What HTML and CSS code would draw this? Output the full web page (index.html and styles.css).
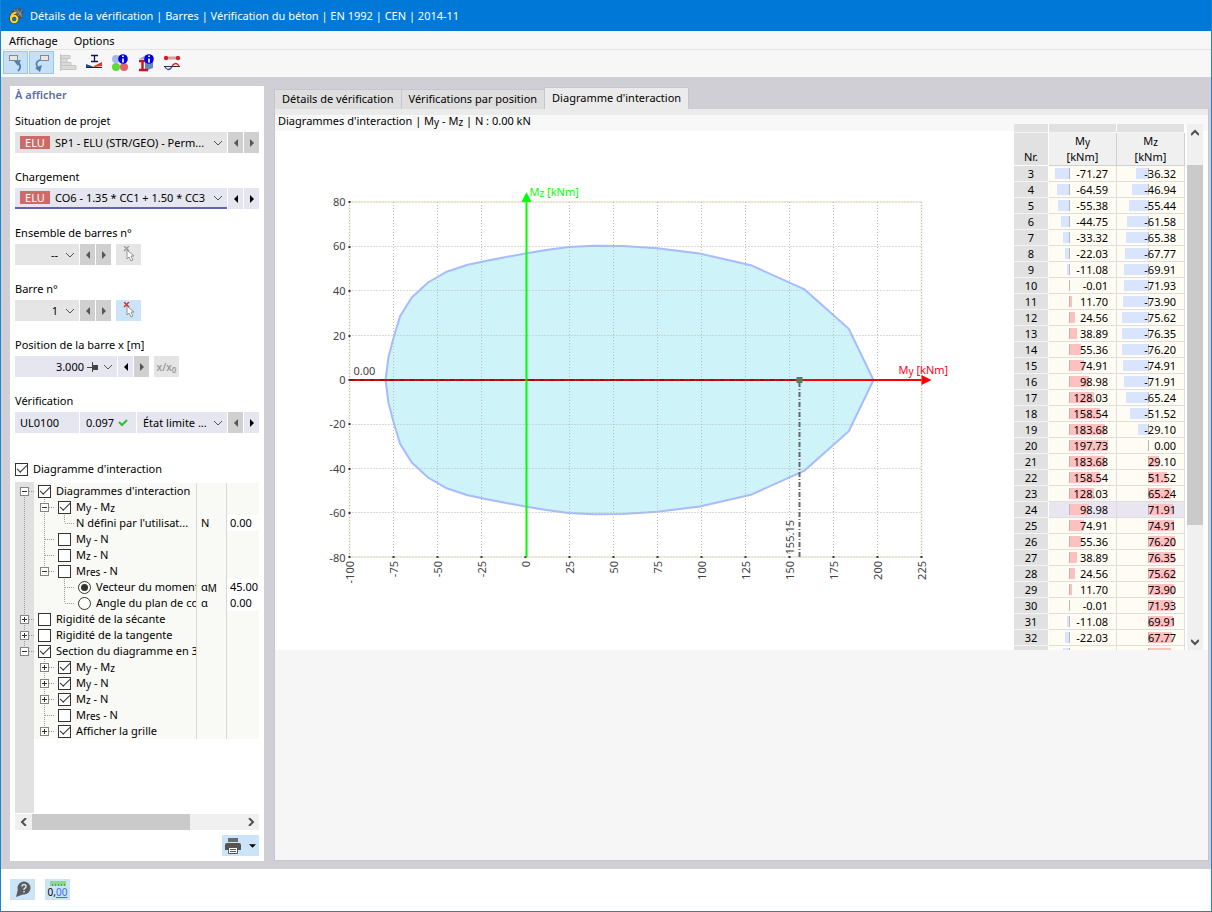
FILE: index.html
```html
<!DOCTYPE html>
<html lang="fr">
<head>
<meta charset="utf-8">
<title>Détails de la vérification</title>
<link rel="stylesheet" href="styles.css">
</head>
<body>
<svg class="defs" aria-hidden="true">
  <symbol id="chevron" viewBox="0 0 10 10"><path d="M1 3l4 4 4-4" fill="none" stroke="#555"/></symbol>
  <symbol id="prev" viewBox="0 0 6 8"><path d="M5 0v8L1 4z" fill="currentColor"/></symbol>
  <symbol id="next" viewBox="0 0 6 8"><path d="M1 0v8l4-4z" fill="currentColor"/></symbol>
  <symbol id="pick" viewBox="0 0 18 18"><path d="M4 0l5 5M9 0L4 5" stroke="currentColor" stroke-width="1.300"/><path d="M7 4v9l2-2 2 4 2-1-2-4h3z" fill="#fff" stroke="#888" stroke-width=".9"/></symbol>
</svg>
<div class="window">
  <header class="titlebar">
    <svg class="logo" viewBox="0 0 16 16"><path d="M3 4Q7-1 12 0l4 3-2 8h-4z" fill="#46586c"/><path d="M6 2l8 5M9 1l5 8M14 2l-4 6" stroke="#9fb0c0" stroke-width=".7"/><path d="M8.500 4.500Q3 5 3 11" fill="none" stroke="#5b4a1c" stroke-width="3.400"/><circle cx="6.200" cy="11" r="3.300" fill="none" stroke="#5b4a1c" stroke-width="3.200"/><path d="M8.500 4.500Q3 5 3 11" fill="none" stroke="#ffd23c" stroke-width="2"/><circle cx="6.200" cy="11" r="3.200" fill="none" stroke="#ffd23c" stroke-width="2"/></svg>
    <h1>Détails de la vérification | Barres | Vérification du béton | EN 1992 | CEN | 2014-11</h1>
  </header>
  <nav class="menu"><button>Affichage</button><button>Options</button></nav>
  <div class="toolbar">
    <button class="tool on" aria-label="Précédent"><svg viewBox="0 0 18 18"><rect x="2.500" y="1.500" width="8" height="5" fill="#e6e6e6" stroke="#888"/><path d="M11 17q5-5-1-9" fill="none" stroke="#4c7fae" stroke-width="1.800"/><path d="M7 7l7-1-3 6z" fill="#4c7fae"/></svg></button>
    <button class="tool on" aria-label="Suivant"><svg viewBox="0 0 18 18"><rect x="7.500" y="1.500" width="8" height="5" fill="#e6e6e6" stroke="#888"/><path d="M7 6Q1 8 5 14" fill="none" stroke="#4c7fae" stroke-width="1.800"/><path d="M2 14l7-3-2 7z" fill="#4c7fae"/></svg></button>
    <button class="tool" aria-label="Barres"><svg viewBox="0 0 18 18"><path d="M1.500 0v17M2 1.500h9v3H2zM2 4.500h6v4H2zM2 8.500h10v3H2zM2 11.500h15v4H2z" fill="#dadada" stroke="#c6c6c6"/></svg></button>
    <button class="tool" aria-label="Section"><svg viewBox="0 0 18 18"><path d="M6 1.500h7M6 7.500h7M9.500 2v5" stroke="#161650" stroke-width="1.300"/><path d="M1 10l8 3v1H1z" fill="#1f4e96"/><path d="M9 12l8-4v4l-8 1z" fill="#e03322"/><path d="M1 13.500h16" stroke="#222"/></svg></button>
    <button class="tool" aria-label="Informations matériaux"><svg viewBox="0 0 18 18"><circle cx="5" cy="5" r="4" fill="#a9b4e8"/><circle cx="5" cy="13" r="4" fill="#5fd83a"/><circle cx="13" cy="13" r="4" fill="#e2616a"/><circle cx="12" cy="5" r="4.800" fill="#0000e0"/><path d="M12 1.500v1.600M12 4.500v4" stroke="#fff" stroke-width="1.700"/></svg></button>
    <button class="tool" aria-label="Informations section"><svg viewBox="0 0 18 18"><path d="M8 8l8-3v9l-8 3z" fill="#6687bd"/><path d="M2 7h7M2 16h9M5.500 7v9" stroke="#c51525" stroke-width="2.400"/><path d="M2 5l7-4h6l-6 4z" fill="#8ea7d0"/><circle cx="12" cy="5" r="4.800" fill="#0000e0"/><path d="M12 1.500v1.600M12 4.500v4" stroke="#fff" stroke-width="1.700"/></svg></button>
    <button class="tool" aria-label="Déformée"><svg viewBox="0 0 18 18"><path d="M3 4h12" stroke="#c9a3a3" stroke-width="3"/><circle cx="3" cy="4" r="2.200" fill="#d61f26"/><circle cx="15" cy="4" r="2.200" fill="#d61f26"/><path d="M1 12.500h16" stroke="#333"/><path d="M2 13q3 5 7 0" fill="none" stroke="#3848c8" stroke-width="1.300"/><path d="M9 12q4-5 7 0" fill="none" stroke="#d81c1c" stroke-width="1.300"/></svg></button>
  </div>
  <main class="workspace">
    <aside class="side">
      <h2>À afficher</h2>
      <div class="field">
        <label for="situation">Situation de projet</label>
        <div class="controls">
          <div class="combo wide"><span class="badge">ELU</span><select id="situation"><option>SP1 - ELU (STR/GEO) - Perm...</option></select><svg class="chev"><use href="#chevron"/></svg></div>
          <button class="step" aria-label="Situation précédente"><svg><use href="#prev"/></svg></button><button class="step" aria-label="Situation suivante"><svg><use href="#next"/></svg></button>
        </div>
      </div>
      <div class="field">
        <label for="chargement">Chargement</label>
        <div class="controls">
          <div class="combo wide live focus"><span class="badge">ELU</span><select id="chargement"><option>CO6 - 1.35 * CC1 + 1.50 * CC3</option></select><svg class="chev"><use href="#chevron"/></svg></div>
          <button class="step live" aria-label="Chargement précédent"><svg><use href="#prev"/></svg></button><button class="step live" aria-label="Chargement suivant"><svg><use href="#next"/></svg></button>
        </div>
      </div>
      <div class="field">
        <label for="ensemble">Ensemble de barres n°</label>
        <div class="controls">
          <div class="combo small"><select id="ensemble"><option>--</option></select><svg class="chev"><use href="#chevron"/></svg></div>
          <button class="step" aria-label="Ensemble précédent"><svg><use href="#prev"/></svg></button><button class="step" aria-label="Ensemble suivant"><svg><use href="#next"/></svg></button>
          <button class="square" aria-label="Sélectionner un ensemble"><svg><use href="#pick"/></svg></button>
        </div>
      </div>
      <div class="field">
        <label for="barre">Barre n°</label>
        <div class="controls">
          <div class="combo small"><select id="barre"><option>1</option></select><svg class="chev"><use href="#chevron"/></svg></div>
          <button class="step" aria-label="Barre précédente"><svg><use href="#prev"/></svg></button><button class="step" aria-label="Barre suivante"><svg><use href="#next"/></svg></button>
          <button class="square blue" aria-label="Sélectionner une barre"><svg><use href="#pick"/></svg></button>
        </div>
      </div>
      <div class="field">
        <label for="position">Position de la barre x [m]</label>
        <div class="controls">
          <div class="combo medium live"><select id="position"><option>3.000</option></select><svg class="mark" viewBox="0 0 11 10"><path d="M0 5.500h6M5.500 0v10" stroke="#444"/><path d="M5 3h6v5H5z" fill="#444"/></svg><svg class="chev"><use href="#chevron"/></svg></div>
          <button class="step live" aria-label="Position précédente"><svg><use href="#prev"/></svg></button><button class="step" aria-label="Position suivante"><svg><use href="#next"/></svg></button>
          <button class="square ratio"><span>x/x<sub>0</sub></span></button>
        </div>
      </div>
      <div class="field">
        <label for="verification">Vérification</label>
        <div class="controls">
          <div class="combo wide live check"><span class="code">UL0100</span><span class="util">0.097<svg class="ok" viewBox="0 0 10 8"><path d="M1 3l3 3 5-5" fill="none" stroke="#2fc12f" stroke-width="2"/></svg></span><select id="verification"><option>État limite ...</option></select><svg class="chev"><use href="#chevron"/></svg></div>
          <button class="step" aria-label="Vérification précédente"><svg><use href="#prev"/></svg></button><button class="step live" aria-label="Vérification suivante"><svg><use href="#next"/></svg></button>
        </div>
      </div>
      <div class="master"><input type="checkbox" id="master" checked><label for="master">Diagramme d'interaction</label></div>
      <div class="tree">
        <ul>
          <li><div class="name"><i class="g first"><button class="exp" aria-label="Réduire"></button></i><i class="g"><input type="checkbox" id="t1" checked></i><label for="t1">Diagrammes d'interaction</label></div><span></span><span></span></li>
          <li><div class="name"><i class="g v"></i><i class="g vh"><button class="exp" aria-label="Réduire"></button></i><i class="g"><input type="checkbox" id="t2" checked></i><label for="t2">M<sub>y</sub> - M<sub>z</sub></label></div><span></span><span></span></li>
          <li><div class="name"><i class="g v"></i><i class="g v"></i><i class="g l"></i><label for="t3">N défini par l'utilisat...</label></div><span>N</span><span><input class="val" type="text" id="t3" value="0.00"></span></li>
          <li><div class="name"><i class="g v"></i><i class="g vh"></i><i class="g"><input type="checkbox" id="t4"></i><label for="t4">M<sub>y</sub> - N</label></div><span></span><span></span></li>
          <li><div class="name"><i class="g v"></i><i class="g vh"></i><i class="g"><input type="checkbox" id="t5"></i><label for="t5">M<sub>z</sub> - N</label></div><span></span><span></span></li>
          <li><div class="name"><i class="g v"></i><i class="g l"><button class="exp" aria-label="Réduire"></button></i><i class="g"><input type="checkbox" id="t6"></i><label for="t6">M<sub>res</sub> - N</label></div><span></span><span></span></li>
          <li><div class="name"><i class="g v"></i><i class="g"></i><i class="g vh"></i><i class="g"><input type="radio" name="mode" id="t7" checked></i><label for="t7">Vecteur du moment</label></div><span>α<sub>M</sub></span><span><input class="val" type="text" aria-label="Angle du vecteur" value="45.00"></span></li>
          <li><div class="name"><i class="g v"></i><i class="g"></i><i class="g l"></i><i class="g"><input type="radio" name="mode" id="t8"></i><label for="t8">Angle du plan de co</label></div><span>α</span><span><input class="val" type="text" aria-label="Angle du plan" value="0.00"></span></li>
          <li><div class="name"><i class="g vh"><button class="exp plus" aria-label="Développer"></button></i><i class="g"><input type="checkbox" id="t9"></i><label for="t9">Rigidité de la sécante</label></div><span></span><span></span></li>
          <li><div class="name"><i class="g vh"><button class="exp plus" aria-label="Développer"></button></i><i class="g"><input type="checkbox" id="t10"></i><label for="t10">Rigidité de la tangente</label></div><span></span><span></span></li>
          <li><div class="name"><i class="g l"><button class="exp" aria-label="Réduire"></button></i><i class="g"><input type="checkbox" id="t11" checked></i><label for="t11">Section du diagramme en 3</label></div><span></span><span></span></li>
          <li><div class="name"><i class="g"></i><i class="g vh"><button class="exp plus" aria-label="Développer"></button></i><i class="g"><input type="checkbox" id="t12" checked></i><label for="t12">M<sub>y</sub> - M<sub>z</sub></label></div><span></span><span></span></li>
          <li><div class="name"><i class="g"></i><i class="g vh"><button class="exp plus" aria-label="Développer"></button></i><i class="g"><input type="checkbox" id="t13" checked></i><label for="t13">M<sub>y</sub> - N</label></div><span></span><span></span></li>
          <li><div class="name"><i class="g"></i><i class="g vh"><button class="exp plus" aria-label="Développer"></button></i><i class="g"><input type="checkbox" id="t14" checked></i><label for="t14">M<sub>z</sub> - N</label></div><span></span><span></span></li>
          <li><div class="name"><i class="g"></i><i class="g vh"></i><i class="g"><input type="checkbox" id="t15"></i><label for="t15">M<sub>res</sub> - N</label></div><span></span><span></span></li>
          <li><div class="name"><i class="g"></i><i class="g l"><button class="exp plus" aria-label="Développer"></button></i><i class="g"><input type="checkbox" id="t16" checked></i><label for="t16">Afficher la grille</label></div><span></span><span></span></li>
        </ul>
      </div>
      <div class="hscroll">
        <button aria-label="Défiler à gauche"><svg viewBox="0 0 8 8"><path d="M6 0L2 4l4 4" /></svg></button>
        <div class="track"><div class="thumb"></div></div>
        <button aria-label="Défiler à droite"><svg viewBox="0 0 8 8"><path d="M2 0l4 4-4 4"/></svg></button>
      </div>
      <button class="print" aria-label="Imprimer"><svg class="printer" viewBox="0 0 16 16"><path d="M3 0h10v4H3z" fill="#6a6a6a"/><path d="M0 7q0-2 2-2h12q2 0 2 2v5H0z" fill="#555"/><path d="M3.500 9.500h9v6h-9z" fill="#fff" stroke="#555"/><path d="M5 11.500h6M5 13.500h6" stroke="#555"/></svg><svg class="drop" viewBox="0 0 8 4"><path d="M0 0h8L4 4z"/></svg></button>
    </aside>
    <section class="main">
      <div class="tabs" role="tablist">
        <button role="tab">Détails de vérification</button><button role="tab">Vérifications par position</button><button role="tab" class="active" aria-selected="true">Diagramme d'interaction</button>
      </div>
      <div class="panel">
        <div class="view">
          <div class="chart">
            <p class="caption">Diagrammes d'interaction | M<sub>y</sub> - M<sub>z</sub> | N : 0.00 kN</p>
            <svg class="plot" viewBox="0 0 738 519">
              <g transform="translate(250 249)">
                <polygon class="shape" points="-140,0 -137,-23 -132,-42 -125.400,-63.900 -113.700,-82.600 -97.500,-97.500 -78.800,-108.300 -58.600,-115 -38.800,-119.200 -19.500,-123 0,-126.500 20.600,-130 43.200,-133 68.400,-134.300 97.400,-134 131.800,-131.800 174.200,-126.500 225.300,-114.800 279,-90.600 323.300,-51.200 348,0 323.300,51.200 279,90.600 225.300,114.800 174.200,126.500 131.800,131.800 97.400,134 68.400,134.300 43.200,133 20.600,130 0,126.500 -19.500,123 -38.800,119.200 -58.600,115 -78.800,108.300 -97.500,97.500 -113.700,82.600 -125.400,63.900 -132,42 -137,23"/>
                <path class="frame" d="M-176-178h572v355h-572z"/>
                <path class="grid" d="M-132-178v355M-88-178v355M-44-178v355M44-178v355M88-178v355M132-178v355M176-178v355M220-178v355M264-178v355M308-178v355M352-178v355M-176-133.500h572M-176-89.500h572M-176-44.500h572M-176 44.500h572M-176 88.500h572M-176 132.500h572M-176-178h572M-176-178v355M396-178v355M-176 177h572"/>
                <path class="ticks" d="M-177-178h2M-177-133h2M-177-89h2M-177-44h2M-177 0h2M-177 44h2M-177 89h2M-177 133h2M-177 177h2M-133 177h2M-89 177h2M-45 177h2M-1 177h2M43 177h2M87 177h2M131 177h2M175 177h2M219 177h2M263 177h2M307 177h2M351 177h2M395 177h2"/>
                <path class="axis-y" d="M-176 0h572"/><path class="head-y" d="M396-5l10 5-10 5z"/>
                <path class="axis-z" d="M1 177v-355"/><path class="head-z" d="M-4-178l5-10 5 10z"/>
                <path class="cursor" d="M-176 0h449"/><path class="cursor v" d="M274 2v175"/>
                <rect class="knot" x="271" y="-3" width="6" height="6"/>
                <g class="ylab"><text x="-180" y="-174">80</text><text x="-180" y="-130">60</text><text x="-180" y="-85">40</text><text x="-180" y="-40">20</text><text x="-180" y="4">0</text><text x="-180" y="48">-20</text><text x="-180" y="93">-40</text><text x="-180" y="137">-60</text><text x="-180" y="182">-80</text></g>
                <g class="xlab">
                  <text transform="translate(-172 181) rotate(-90)">-100</text><text transform="translate(-128 181) rotate(-90)">-75</text><text transform="translate(-84 181) rotate(-90)">-50</text><text transform="translate(-40 181) rotate(-90)">-25</text><text transform="translate(4 181) rotate(-90)">0</text><text transform="translate(48 181) rotate(-90)">25</text><text transform="translate(92 181) rotate(-90)">50</text><text transform="translate(136 181) rotate(-90)">75</text><text transform="translate(180 181) rotate(-90)">100</text><text transform="translate(224 181) rotate(-90)">125</text><text transform="translate(268 181) rotate(-90)">150</text><text transform="translate(312 181) rotate(-90)">175</text><text transform="translate(356 181) rotate(-90)">200</text><text transform="translate(400 181) rotate(-90)">225</text>
                  <text transform="translate(268 140) rotate(-90)">155.15</text>
                </g>
                <text x="-172" y="-5">0.00</text>
                <text class="t-y" x="373" y="-6">M<tspan class="s" dy="1">y</tspan><tspan dy="-1"> [kNm]</tspan></text>
                <text class="t-z" x="4" y="-184">M<tspan class="s" dy="1">z</tspan><tspan dy="-1"> [kNm]</tspan></text>
              </g>
            </svg>
          </div>
          <div class="grid-wrap">
            <table>
              <thead>
                <tr class="strip"><th></th><th></th><th></th></tr>
                <tr class="heads"><th scope="col">Nr.</th><th scope="col">M<sub>y</sub><br>[kNm]</th><th scope="col">M<sub>z</sub><br>[kNm]</th></tr>
              </thead>
              <tbody>
                <tr><th>3</th><td><i class="neg" style="--v:71.27"></i><b>-71.27</b></td><td><i class="neg" style="--v:36.32"></i><b>-36.32</b></td></tr>
                <tr><th>4</th><td><i class="neg" style="--v:64.59"></i><b>-64.59</b></td><td><i class="neg" style="--v:46.94"></i><b>-46.94</b></td></tr>
                <tr><th>5</th><td><i class="neg" style="--v:55.38"></i><b>-55.38</b></td><td><i class="neg" style="--v:55.44"></i><b>-55.44</b></td></tr>
                <tr><th>6</th><td><i class="neg" style="--v:44.75"></i><b>-44.75</b></td><td><i class="neg" style="--v:61.58"></i><b>-61.58</b></td></tr>
                <tr><th>7</th><td><i class="neg" style="--v:33.32"></i><b>-33.32</b></td><td><i class="neg" style="--v:65.38"></i><b>-65.38</b></td></tr>
                <tr><th>8</th><td><i class="neg" style="--v:22.03"></i><b>-22.03</b></td><td><i class="neg" style="--v:67.77"></i><b>-67.77</b></td></tr>
                <tr><th>9</th><td><i class="neg" style="--v:11.08"></i><b>-11.08</b></td><td><i class="neg" style="--v:69.91"></i><b>-69.91</b></td></tr>
                <tr><th>10</th><td><i class="neg" style="--v:0.01"></i><b>-0.01</b></td><td><i class="neg" style="--v:71.93"></i><b>-71.93</b></td></tr>
                <tr><th>11</th><td><i class="pos" style="--v:11.70"></i><b>11.70</b></td><td><i class="neg" style="--v:73.90"></i><b>-73.90</b></td></tr>
                <tr><th>12</th><td><i class="pos" style="--v:24.56"></i><b>24.56</b></td><td><i class="neg" style="--v:75.62"></i><b>-75.62</b></td></tr>
                <tr><th>13</th><td><i class="pos" style="--v:38.89"></i><b>38.89</b></td><td><i class="neg" style="--v:76.35"></i><b>-76.35</b></td></tr>
                <tr><th>14</th><td><i class="pos" style="--v:55.36"></i><b>55.36</b></td><td><i class="neg" style="--v:76.20"></i><b>-76.20</b></td></tr>
                <tr><th>15</th><td><i class="pos" style="--v:74.91"></i><b>74.91</b></td><td><i class="neg" style="--v:74.91"></i><b>-74.91</b></td></tr>
                <tr><th>16</th><td><i class="pos" style="--v:98.98"></i><b>98.98</b></td><td><i class="neg" style="--v:71.91"></i><b>-71.91</b></td></tr>
                <tr><th>17</th><td><i class="pos" style="--v:128.03"></i><b>128.03</b></td><td><i class="neg" style="--v:65.24"></i><b>-65.24</b></td></tr>
                <tr><th>18</th><td><i class="pos" style="--v:158.54"></i><b>158.54</b></td><td><i class="neg" style="--v:51.52"></i><b>-51.52</b></td></tr>
                <tr><th>19</th><td><i class="pos" style="--v:183.68"></i><b>183.68</b></td><td><i class="neg" style="--v:29.10"></i><b>-29.10</b></td></tr>
                <tr><th>20</th><td><i class="pos" style="--v:197.73"></i><b>197.73</b></td><td><i class="pos" style="--v:0"></i><b>0.00</b></td></tr>
                <tr><th>21</th><td><i class="pos" style="--v:183.68"></i><b>183.68</b></td><td><i class="pos" style="--v:29.10"></i><b>29.10</b></td></tr>
                <tr><th>22</th><td><i class="pos" style="--v:158.54"></i><b>158.54</b></td><td><i class="pos" style="--v:51.52"></i><b>51.52</b></td></tr>
                <tr><th>23</th><td><i class="pos" style="--v:128.03"></i><b>128.03</b></td><td><i class="pos" style="--v:65.24"></i><b>65.24</b></td></tr>
                <tr class="sel"><th>24</th><td><i class="pos" style="--v:98.98"></i><b>98.98</b></td><td><i class="pos" style="--v:71.91"></i><b>71.91</b></td></tr>
                <tr><th>25</th><td><i class="pos" style="--v:74.91"></i><b>74.91</b></td><td><i class="pos" style="--v:74.91"></i><b>74.91</b></td></tr>
                <tr><th>26</th><td><i class="pos" style="--v:55.36"></i><b>55.36</b></td><td><i class="pos" style="--v:76.20"></i><b>76.20</b></td></tr>
                <tr><th>27</th><td><i class="pos" style="--v:38.89"></i><b>38.89</b></td><td><i class="pos" style="--v:76.35"></i><b>76.35</b></td></tr>
                <tr><th>28</th><td><i class="pos" style="--v:24.56"></i><b>24.56</b></td><td><i class="pos" style="--v:75.62"></i><b>75.62</b></td></tr>
                <tr><th>29</th><td><i class="pos" style="--v:11.70"></i><b>11.70</b></td><td><i class="pos" style="--v:73.90"></i><b>73.90</b></td></tr>
                <tr><th>30</th><td><i class="neg" style="--v:0.01"></i><b>-0.01</b></td><td><i class="pos" style="--v:71.93"></i><b>71.93</b></td></tr>
                <tr><th>31</th><td><i class="neg" style="--v:11.08"></i><b>-11.08</b></td><td><i class="pos" style="--v:69.91"></i><b>69.91</b></td></tr>
                <tr><th>32</th><td><i class="neg" style="--v:22.03"></i><b>-22.03</b></td><td><i class="pos" style="--v:67.77"></i><b>67.77</b></td></tr>
                <tr><th>33</th><td><i class="neg" style="--v:33.32"></i><b>-33.32</b></td><td><i class="pos" style="--v:65.38"></i><b>65.38</b></td></tr>
              </tbody>
            </table>
            <div class="vscroll">
              <button aria-label="Défiler vers le haut"><svg viewBox="0 0 8 8"><path d="M0 6l4-4 4 4"/></svg></button>
              <div class="track"><div class="thumb"></div></div>
              <button aria-label="Défiler vers le bas"><svg viewBox="0 0 8 8"><path d="M0 2l4 4 4-4"/></svg></button>
            </div>
          </div>
        </div>
        <div class="rest"></div>
      </div>
    </section>
  </main>
  <footer class="footer">
    <button class="square blue" aria-label="Aide"><svg viewBox="0 0 18 18"><circle cx="10" cy="7" r="6.500" fill="#5c5c5c"/><path d="M4 8l-2 8 8-3z" fill="#5c5c5c"/><path d="M8 5.500q0-2 2-2t2 2q0 1-2 2.500v1M10 10v1.500" fill="none" stroke="#cce4f7" stroke-width="1.500"/></svg></button>
    <button class="square blue units" aria-label="Unités"><svg viewBox="0 0 16 5"><path d="M0 0h16v5H0z" fill="#8fd882"/><path d="M2.500 3v2M5.500 3v2M8.500 3v2M11.500 3v2M14.500 3v2" stroke="#5a9a50"/></svg><span>0,<u>00</u></span></button>
  </footer>
</div>
</body>
</html>
```

FILE: styles.css
```css
* { box-sizing: border-box; }
body { margin: 0; font: 11px/16px "Noto Sans", "Open Sans", sans-serif; color: #000; }
button, input, select { font: inherit; color: inherit; margin: 0; padding: 0; border: 0; background: none; }
button { display: flex; align-items: center; justify-content: center; }
h1, h2, p, ul { margin: 0; padding: 0; font-size: 11px; font-weight: normal; }
ul { list-style: none; }
sub { font-size: 10px; line-height: 0; vertical-align: -1px; }
.defs { display: none; }

.window { display: flex; flex-direction: column; height: 100vh; border: 1px solid #1883d7; border-top: 0; background: #fff; }
.titlebar { display: flex; align-items: center; gap: 6px; height: 31px; padding-left: 7px; background: #0078d7; color: #fff; }
.logo { width: 16px; height: 16px; }
.menu { display: flex; gap: 16px; height: 19px; padding: 1px 8px 0; border-bottom: 1px solid #e4e4e4; background: #f7f7f7; }
.toolbar { display: flex; gap: 1px; height: 27px; padding: 1px 2px; background: #f7f7f7; }
.tool { width: 25px; height: 23px; border: 1px solid transparent; }
.tool.on { background: #c5e0f7; border-color: #90c8f6; }
.tool svg { width: 18px; height: 18px; }

.workspace { flex: 1; display: flex; gap: 10px; min-height: 0; padding: 9px 2px 8px 9px; background: #d0cfd6; }
.side { flex: 0 0 254px; display: flex; flex-direction: column; padding: 1px 5px 5px; background: #fff; }
.side h2 { height: 23px; font-weight: 600; color: #5b709c; }
.field { margin-bottom: 13px; }
.field label { display: block; height: 22px; line-height: 22px; }
.controls { display: flex; gap: 1px; height: 21px; }
.combo { display: flex; align-items: center; background: #e5e5e5; padding-right: 4px; }
.combo.live { background: #e6e6f1; }
.combo.focus { border-bottom: 2px solid #6464ae; }
.combo.wide { flex: 1; padding-left: 5px; }
.combo.small { width: 64px; }
.combo.medium { width: 102px; }
.combo select { appearance: none; flex: 1; min-width: 0; height: 19px; }
.small select, .medium select { text-align: right; text-align-last: right; padding-right: 7px; }
.medium select { padding-right: 3px; }
.badge { width: 30px; height: 13px; margin-right: 5px; line-height: 13px; text-align: center; background: #cf6a69; color: #fff; }
.chev { width: 10px; height: 10px; }
.mark { width: 11px; height: 10px; margin-right: 5px; }
.check { align-items: stretch; }
.check .chev { align-self: center; }
.check .code { width: 60px; line-height: 21px; border-right: 1px solid #fff; }
.check .util { display: flex; align-items: center; gap: 4px; width: 57px; padding-left: 6px; border-right: 1px solid #fff; }
.check select { padding-left: 6px; height: 21px; }
.ok { width: 10px; height: 8px; }
.step { width: 15px; background: #d0d0d0; color: #555; }
.step.live { background: #e6e6f1; color: #000; }
.step svg { width: 6px; height: 8px; }
.square { width: 25px; height: 21px; background: #e5e5e5; color: #999; }
.controls .square { margin-left: 4px; }
.square.blue { background: #cce4f7; color: #e02020; }
.square svg { width: 18px; height: 18px; }
.ratio { font-size: 10px; font-weight: 600; color: #999; }
.ratio sub { font-size: 8px; vertical-align: -2px; }

.master { display: flex; align-items: center; gap: 5px; height: 16px; margin: 15px 0 5px; }
input[type="checkbox"] { appearance: none; display: grid; place-items: center; width: 13px; height: 13px; border: 1px solid #333; background: #fff; }
input[type="checkbox"]:checked::before { content: ""; width: 9px; height: 4px; margin-bottom: 3px; border: solid #333; border-width: 0 0 1px 1px; rotate: -45deg; }
input[type="radio"] { appearance: none; display: grid; place-items: center; width: 13px; height: 13px; border: 1px solid #333; border-radius: 50%; background: #fff; }
input[type="radio"]:checked::before { content: ""; width: 7px; height: 7px; border-radius: 50%; background: #333; }

.tree { flex: 1; min-height: 0; overflow: hidden; background: linear-gradient(90deg, #e1e1e1 19px, #fff 19px); }
.tree li { display: grid; grid-template-columns: 181px 30px 1fr; height: 16px; }
.tree ul { padding-top: 1px; }
.name { display: flex; overflow: hidden; white-space: nowrap; background: linear-gradient(90deg, #e1e1e1 19px, #f9faf5 19px); }
.name label { padding-left: 1px; }
.tree li > span { padding-left: 4px; border-left: 1px solid #d8d8d8; background: #f9faf5; white-space: nowrap; }
.tree li > span:has(.val) { padding-left: 3px; background: #fff; }
.val { display: block; width: 100%; height: 16px; }
.g { --dv: repeating-linear-gradient(#999 0 1px, transparent 1px 2px); --dh: repeating-linear-gradient(90deg, #999 0 1px, transparent 1px 2px); flex: 0 0 20px; display: grid; place-items: center; background-repeat: no-repeat; }
.g input { margin-right: 1px; }
.g.v { background-image: var(--dv); background-position: 9px 0; background-size: 1px 100%; }
.g.vh { background-image: var(--dv), var(--dh); background-position: 9px 0, 10px 8px; background-size: 1px 100%, 11px 1px; }
.g.l { background-image: var(--dv), var(--dh); background-position: 9px 0, 10px 8px; background-size: 1px 8px, 11px 1px; }
.g.first { background-image: var(--dv), var(--dh); background-position: 9px 8px, 10px 8px; background-size: 1px 8px, 11px 1px; }
.exp { width: 9px; height: 9px; margin-right: 1px; border: 1px solid #848484; background: linear-gradient(#333, #333) center / 5px 1px no-repeat #fff; }
.exp.plus { background: linear-gradient(#333, #333) center / 5px 1px no-repeat, linear-gradient(#333, #333) center / 1px 5px no-repeat #fff; }

.hscroll { display: flex; height: 16px; margin-top: 1px; background: #f0f0f0; }
.hscroll button { width: 17px; }
.track { flex: 1; }
.thumb { background: #cacaca; }
.hscroll .thumb { width: 75%; height: 100%; }
.hscroll svg, .vscroll svg { width: 8px; height: 8px; fill: none; stroke: #505050; stroke-width: 2; }
.print { align-self: flex-end; gap: 8px; width: 37px; height: 21px; margin-top: 5px; background: #cce4f7; }
.printer { width: 16px; height: 16px; }
.drop { width: 7px; height: 4px; }

.main { flex: 1; display: flex; flex-direction: column; min-width: 0; padding-top: 1px; }
.tabs { display: flex; align-items: flex-end; height: 22px; }
.tabs button { height: 20px; padding: 0 7px 2px; border: 1px solid #c6c5d2; border-width: 1px 1px 0 0; background: #dedede; }
.tabs button:first-child { border-left-width: 1px; }
.tabs .active { height: 22px; background: #ebebeb; }
.panel { flex: 1; display: flex; flex-direction: column; min-height: 0; padding-top: 6px; border: 1px solid #c6c5d2; border-top: 0; background: #ebebeb; }
.view { flex: 107 1 0; display: flex; min-height: 0; overflow: hidden; background: linear-gradient(#f8f8f8 16px, #fff 16px); }
.rest { flex: 42 1 0; background: #f6f6f6; }
.chart { flex: 1; display: flex; flex-direction: column; min-width: 0; }
.caption { height: 16px; padding-left: 3px; line-height: 12px; }
.plot { flex: 1; min-height: 0; width: 100%; }
.plot text { font-size: 11px; fill: #444; }
.plot .s { font-size: 10px; }
.plot .t-y { fill: #f02; }
.plot .t-z { fill: #0f0; }
.ylab { text-anchor: end; }
.xlab { text-anchor: end; }
.shape { fill: #cef3f9; stroke: #a6bcff; stroke-width: 2; }
.frame { fill: none; stroke: #f5f2e2; stroke-width: 2; }
.grid { fill: none; stroke: #bbb; stroke-width: 1; stroke-dasharray: 1 2; }
.ticks { stroke: #333; stroke-width: 2; }
.axis-y { stroke: red; stroke-width: 2; }
.axis-z { stroke: #0f0; stroke-width: 2; }
.head-y { fill: red; }
.head-z { fill: #0f0; }
.cursor { stroke: #222; stroke-width: 1; stroke-dasharray: 5 2 1 2; }
.cursor.v { stroke-width: 2; stroke: #666; }
.knot { fill: #5b7a68; }

.grid-wrap { display: flex; gap: 2px; margin: 9px 5px 0 0; overflow: hidden; }
table { table-layout: fixed; width: 171px; border-collapse: separate; border-spacing: 0; align-self: flex-start; }
th { font-weight: normal; padding: 0; height: 16px; line-height: 15px; background: #e1e1e1; border-right: 1px solid #fff; border-bottom: 1px solid #f4f4f4; }
th:first-child { width: 35px; }
.strip th { height: 9px; line-height: 0; }
.heads th { height: 33px; vertical-align: bottom; background: #f0f0f0; border-color: #d0d0d0; line-height: 16px; }
.heads th:first-child { background: #e1e1e1; border-color: #fff; }
td { position: relative; height: 16px; padding: 0 8px 0 0; text-align: right; line-height: 15px; background: #fffdf3; border: solid #dedede; border-width: 0 1px 1px 0; }
td b { position: relative; font-weight: normal; }
td i { --zero: 20px; --scale: .19px; position: absolute; top: 2px; height: 11px; width: calc(var(--v) * var(--scale) + 1px); }
td:last-child i { --zero: 31px; --scale: .34px; }
.pos { left: var(--zero); background: #ffc0c0; border-left: 1px solid #b8b8b8; }
.neg { right: calc(100% - var(--zero) - 1px); background: #d9e5ff; border-right: 1px solid #b8b8b8; }
.sel td { background: #e9e6f2; }
.vscroll { display: flex; flex-direction: column; width: 16px; background: #f0f0f0; }
.vscroll button { height: 17px; }
.vscroll .track { padding-top: 24px; }
.vscroll .thumb { height: 77%; }

.footer { display: flex; gap: 10px; height: 42px; padding: 10px 9px; background: #fff; }
.units { flex-direction: column; }
.square.units { color: #000; }
.square.units svg { width: 16px; height: 5px; }
.units span { font-size: 10px; line-height: 12px; }
.units u { color: #4169e1; }
```
